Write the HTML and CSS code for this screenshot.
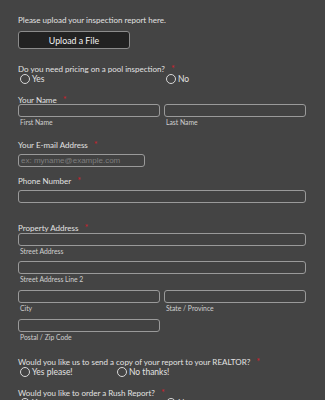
FILE: index.html
```html
<!DOCTYPE html>
<html>
<head>
  <meta charset="UTF-8">
  <title>Inspection Request</title>
  <link rel="stylesheet" href="styles.css">
</head>
<body>
  <form class="form">
    <div class="intro">Please upload your inspection report here.</div>
    <button type="button" class="upload">Upload a File</button>

    <div class="label q1">Do you need pricing on a pool inspection?<span class="req">*</span></div>
    <div class="radios two">
      <label class="opt"><span class="dot"></span>Yes</label>
      <label class="opt"><span class="dot"></span>No</label>
    </div>

    <div class="label name">Your Name<span class="req">*</span></div>
    <div class="pair tight">
      <div>
        <div class="inp"></div>
        <div class="sub">First Name</div>
      </div>
      <div>
        <div class="inp"></div>
        <div class="sub">Last Name</div>
      </div>
    </div>

    <div class="label email">Your E-mail Address<span class="req">*</span></div>
    <div class="inp mail"><span class="ph">ex: myname@example.com</span></div>

    <div class="label phone">Phone Number<span class="req">*</span></div>
    <div class="inp"></div>

    <div class="label addr">Property Address<span class="req">*</span></div>
    <div class="inp"></div>
    <div class="sub">Street Address</div>
    <div class="inp gap5"></div>
    <div class="sub">Street Address Line 2</div>
    <div class="pair gap6">
      <div>
        <div class="inp"></div>
        <div class="sub">City</div>
      </div>
      <div>
        <div class="inp"></div>
        <div class="sub">State / Province</div>
      </div>
    </div>
    <div class="pair gap6">
      <div>
        <div class="inp"></div>
        <div class="sub">Postal / Zip Code</div>
      </div>
    </div>

    <div class="label realtor">Would you like us to send a copy of your report to your REALTOR?<span class="req">*</span></div>
    <div class="radios three">
      <label class="opt"><span class="dot"></span>Yes please!</label>
      <label class="opt"><span class="dot"></span>No thanks!</label>
    </div>

    <div class="label rush">Would you like to order a Rush Report?<span class="req">*</span></div>
    <div class="radios two">
      <label class="opt"><span class="dot"></span>Yes</label>
      <label class="opt"><span class="dot"></span>No</label>
    </div>
  </form>
</body>
</html>
```

FILE: styles.css
```css
html, body {
  margin: 0;
  background-color: #444444;
}
body {
  font-family: "Lato", "Noto Sans", sans-serif;
  color: #e2e2e2;
  font-size: 8px;
  overflow: hidden;
}
.form {
  padding: 15px 19px 0 18px;
}
.intro {
  line-height: 10px;
}
.upload {
  display: block;
  margin-top: 6px;
  width: 112px;
  height: 18px;
  padding: 0;
  border: 1px solid #8c8c8c;
  border-radius: 3px;
  background-color: #222222;
  background-image: radial-gradient(#3a3a3a 0.6px, transparent 0.7px);
  background-size: 4px 4px;
  color: #f2f2f2;
  font-family: "Lato", "Noto Sans", sans-serif;
  font-size: 8.8px;
}
.label {
  line-height: 10px;
}
.req {
  color: #d0202c;
  margin-left: 6px;
  font-size: 9px;
}
.q1 { margin-top: 15px; }
.name { margin-top: 11px; }
.email { margin-top: 13px; }
.phone { margin-top: 9px; }
.addr { margin-top: 20px; }
.realtor { margin-top: 15px; }
.rush { margin-top: 11px; }
.tight { margin-top: -1px; }
.email + .inp,
.phone + .inp {
  margin-top: 4px;
}

.radios {
  display: grid;
  line-height: 10px;
  font-size: 8.5px;
}
.radios.two { grid-template-columns: 146px 1fr; }
.radios.three { grid-template-columns: 97px 1fr; }
.opt {
  display: flex;
  align-items: center;
}
.dot {
  display: inline-block;
  width: 8px;
  height: 8px;
  border: 1px solid #d8d8d8;
  border-radius: 50%;
  margin: 0 2px 0 2px;
}

.pair {
  display: grid;
  grid-template-columns: 1fr 1fr;
  column-gap: 4px;
}
.inp {
  box-sizing: border-box;
  height: 13px;
  border: 1px solid #9a9a9a;
  border-radius: 3px;
  background-color: #424242;
}
.inp.mail {
  width: 127px;
  display: flex;
  align-items: center;
  padding-left: 2px;
}
.ph {
  color: #7e7e7e;
  font-family: "Liberation Sans", Arial, sans-serif;
  font-size: 8px;
}
.sub {
  font-size: 6.8px;
  line-height: 10px;
  padding-left: 2px;
  color: #cfcfcf;
}
.gap5 { margin-top: 5px; }
.gap6 { margin-top: 6px; }
```
